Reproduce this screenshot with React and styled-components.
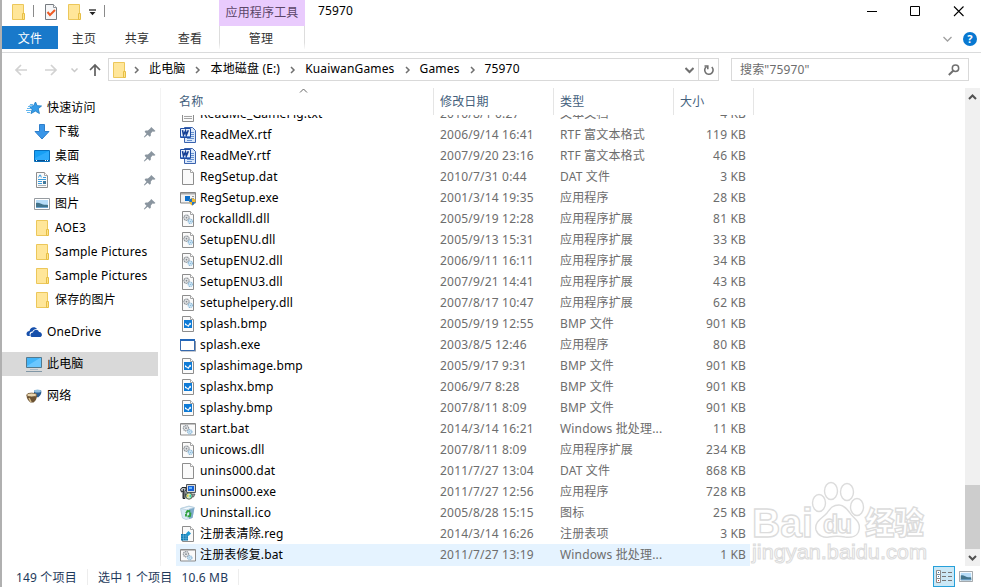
import React from 'react';
import styled, { createGlobalStyle } from 'styled-components';

const quickAccess = [
    { icon: 'download', name: '下载', pinned: true },
    { icon: 'desktop', name: '桌面', pinned: true },
    { icon: 'document', name: '文档', pinned: true },
    { icon: 'picture', name: '图片', pinned: true },
    { icon: 'folder', name: 'AOE3' },
    { icon: 'folder', name: 'Sample Pictures' },
    { icon: 'folder', name: 'Sample Pictures' },
    { icon: 'folder', name: '保存的图片' },
];

const files = [
    ['txt', 'ReadMe_GameFig.txt', '2010/8/1 0:27', '文本文档', '4 KB'],
    ['rtf', 'ReadMeX.rtf', '2006/9/14 16:41', 'RTF 富文本格式', '119 KB'],
    ['rtf', 'ReadMeY.rtf', '2007/9/20 23:16', 'RTF 富文本格式', '46 KB'],
    ['dat', 'RegSetup.dat', '2010/7/31 0:44', 'DAT 文件', '3 KB'],
    ['setup', 'RegSetup.exe', '2001/3/14 19:35', '应用程序', '28 KB'],
    ['dll', 'rockalldll.dll', '2005/9/19 12:28', '应用程序扩展', '81 KB'],
    ['dll', 'SetupENU.dll', '2005/9/13 15:31', '应用程序扩展', '33 KB'],
    ['dll', 'SetupENU2.dll', '2006/9/11 16:11', '应用程序扩展', '34 KB'],
    ['dll', 'SetupENU3.dll', '2007/9/21 14:41', '应用程序扩展', '43 KB'],
    ['dll', 'setuphelpery.dll', '2007/8/17 10:47', '应用程序扩展', '62 KB'],
    ['bmp', 'splash.bmp', '2005/9/19 12:55', 'BMP 文件', '901 KB'],
    ['exe', 'splash.exe', '2003/8/5 12:46', '应用程序', '80 KB'],
    ['bmp', 'splashimage.bmp', '2005/9/17 9:31', 'BMP 文件', '901 KB'],
    ['bmp', 'splashx.bmp', '2006/9/7 8:28', 'BMP 文件', '901 KB'],
    ['bmp', 'splashy.bmp', '2007/8/11 8:09', 'BMP 文件', '901 KB'],
    ['bat', 'start.bat', '2014/3/14 16:21', 'Windows 批处理...', '11 KB'],
    ['dll', 'unicows.dll', '2007/8/11 8:09', '应用程序扩展', '234 KB'],
    ['dat', 'unins000.dat', '2011/7/27 13:04', 'DAT 文件', '868 KB'],
    ['unins', 'unins000.exe', '2011/7/27 12:56', '应用程序', '728 KB'],
    ['recycle', 'Uninstall.ico', '2005/8/28 15:15', '图标', '25 KB'],
    ['reg', '注册表清除.reg', '2014/3/14 16:26', '注册表项', '3 KB'],
    ['bat', '注册表修复.bat', '2011/7/27 13:19', 'Windows 批处理...', '1 KB'],
];

const crumbs = ['此电脑', '本地磁盘 (E:)', 'KuaiwanGames', 'Games', '75970'];

// blank sheet with a folded corner, shared by most file types
const Sheet = () => (
    <>
        <path d="M2.5.5h8l3 3v12h-11z" fill="#fafafa" stroke="#8d8d8d" />
        <path d="M10.5.5v3h3" fill="#fff" stroke="#a5a5a5" />
    </>
);

const Gears = () => (
    <>
        <circle cx="6.5" cy="6.7" r="2.6" fill="#e8eaec" stroke="#92979c" strokeWidth="1.3" strokeDasharray="1.3 .5" />
        <circle cx="6.5" cy="6.7" r=".9" fill="#858c92" />
        <circle cx="10.3" cy="10.3" r="2.1" fill="#d8ecfa" stroke="#8db9d8" strokeWidth="1.3" strokeDasharray="1.1 .5" />
        <circle cx="10.3" cy="10.3" r=".6" fill="#6ea6cb" />
    </>
);

const drawings = {
    folder: (
        <>
            <path d="M2.500.5h11v15h-11z" fill="#ffe699" stroke="#ecc75a" />
            <path d="M12.500 9.500h2v6h-2z" fill="#ffe38a" stroke="#e6be45" />
        </>
    ),
    download: <path d="M5.500.5h5v7h4.500L8 15 1 7.500h4.500z" fill="#3a96e8" stroke="#2f7fcb" />,
    desktop: (
        <>
            <path d="M.5 2.500h15v11H.5z" fill="#17a0f5" stroke="#0870bd" />
            <path d="M1 10L15 3v9H1z" fill="#2eacfc" />
            <path d="M1 12.500h14" stroke="#084f8c" />
            <path d="M2 12.500h1M11 12.500h1M13 12.500h1" stroke="#fff" />
        </>
    ),
    document: (
        <>
            <Sheet />
            <path d="M4.500 5.500l1.200-2.500h.8l.8 2.500M9 5.500h3M4 7.500h8M4 9.500h4M4 11.500h4" stroke="#3a9bdc" fill="none" />
            <path d="M4 13.500h8" stroke="#a9b3ba" />
            <path d="M9 9h3v3H9z" fill="#41799b" />
        </>
    ),
    picture: (
        <>
            <path d="M.5 2.500h15v11H.5z" fill="#fff" stroke="#969ba0" />
            <path d="M2 4h12v8H2z" fill="#b6dcf8" />
            <path d="M2 7c3-1 5 1 7 1.500 2 .5 3 0 5 .5v3H2z" fill="#42748c" />
            <path d="M2 11h12v1H2z" fill="#6ea5cf" />
        </>
    ),
    star: (
        <>
            <path d="M9.500 2l1.600 3.700 4.400.3-3.300 2.700 1.200 4.800-4-2.400L5 13.500l1.200-4.500L3 6.200l4.600-.4z" fill="#369ce9" stroke="#217fc6" strokeWidth=".9" />
            <path d="M4 4.500h3M2 6.500h4M1 8.500h4M0 10.500h5M1 12.500h3" stroke="#64b7ef" />
        </>
    ),
    onedrive: (
        <>
            <path d="M1 11.500C-.5 9 1.500 7 3.500 7c.5-4 5.500-5 7.500-2-2-.3-4 1-4.500 2.500C4 7.500 3 9.500 4 12H2c-.5 0-.8-.2-1-.5z" fill="#164fab" />
            <path d="M5.500 13c-2-1-1-4.500 1.500-4.500C8 5 12 5 13 8c3-.3 4 4 1.500 5z" fill="#164fab" />
        </>
    ),
    pc: (
        <>
            <path d="M.5 1.500h15v10H.5z" fill="#42b4f8" stroke="#52798e" />
            <path d="M1 10L14 2h1v9H1z" fill="#6ac7ff" />
            <path d="M4 13.500h8" stroke="#a8bac7" />
            <path d="M0 15.500h16" stroke="#8197a6" />
        </>
    ),
    network: (
        <>
            <path d="M8 2.500l7-.5c1 3 0 5-3 7.500-3-1-4.500-3.500-4-7z" fill="#2c5e91" />
            <ellipse cx="11.500" cy="3" rx="3.500" ry="1.500" fill="#92bfdf" />
            <path d="M.5 7h10.500c0 3-1 6-3.500 7.500h-3C2 13 .5 10 .5 7z" fill="#6b5232" />
            <ellipse cx="5.700" cy="7" rx="5" ry="1.900" fill="#e8d5ae" stroke="#6e5636" strokeWidth=".8" />
            <path d="M3 10l2 4" stroke="#d6bd8c" strokeWidth="1.500" />
        </>
    ),
    txt: (
        <>
            <Sheet />
            <path d="M4 6.500h8M4 8.500h8M4 10.500h8M4 12.500h8" stroke="#a4a4a4" />
        </>
    ),
    rtf: (
        <>
            <path d="M4.500.5h8l3 3v12h-11z" fill="#dbe8fa" stroke="#3a62ad" />
            <path d="M11 5.500h3M11 7.500h3M11 9.500h3M7 11.500h7M7 13.500h5" stroke="#6590cf" />
            <path d="M.5 1.500h10v9H.5z" fill="#e9f1fc" stroke="#1f4da3" />
            <path d="M1 9h9v1H1z" fill="#5b8ad6" />
            <path d="M2.500 3.200L3.500 8l2-4 .8 4 2-4.800" fill="none" stroke="#143f94" strokeWidth="1.600" />
        </>
    ),
    dat: <Sheet />,
    setup: (
        <>
            <path d="M.5 2.500h15v10.500H.5z" fill="#f2f2f2" stroke="#858585" />
            <path d="M1 3h14v1.500H1z" fill="#aaa" />
            <path d="M5 6h5v5H5z" fill="#0d6fcb" />
            <path d="M12 6.500h2M12 8.500h2" stroke="#9a9a9a" />
            <path d="M9 9.500l3-1.300 3.500 1.300c0 3-1 5-3.500 6-2-1-3-3-3-6z" fill="#f4bb2c" />
            <path d="M12 8.200v3.700H9.300L9 9.500zM12 11.900h3c-.5 2-1.500 3-3 3.600z" fill="#2673c4" />
        </>
    ),
    dll: (
        <>
            <Sheet />
            <Gears />
        </>
    ),
    bmp: (
        <>
            <Sheet />
            <path d="M4 4h8v8H4z" fill="#0f7bd6" />
            <path d="M5 9V7l1.500 1.200L8 9.500l2-3 1 1V9l-1-.5L8.500 11 6.500 9.500z" fill="#fff" />
        </>
    ),
    exe: (
        <>
            <path d="M1 4h15v10.500H1z" fill="#8c96a6" />
            <path d="M.5 2.500h14v11H.5z" fill="#fff" stroke="#3669ad" />
            <path d="M0 2h15v2H0z" fill="#2367b9" />
        </>
    ),
    bat: (
        <>
            <path d="M.5 2.500h15v11.500H.5z" fill="#fafafa" stroke="#8b8b8b" />
            <path d="M1 3.500h14" stroke="#c2c2c2" />
            <g transform="translate(-.5 .5)">
                <Gears />
            </g>
        </>
    ),
    unins: (
        <>
            <path d="M6.500.5h9v8h-9z" fill="#d5d8dc" stroke="#4f555b" />
            <path d="M8 2h6v5H8z" fill="#1661d9" />
            <path d="M9 3h3v2H9z" fill="#64b8ff" />
            <path d="M5 10h10l-1.500 3H6z" fill="#9da2a6" stroke="#42464a" strokeWidth=".7" />
            <path d="M.5 5.500L2 3.500h4v2L5 7v7.500H3V7L1.500 8z" fill="#b9bdc1" stroke="#22272b" />
            <path d="M3.500 5v9" stroke="#33393e" />
            <circle cx="9" cy="12" r="3.200" fill="#d9e6c4" stroke="#2e4939" strokeWidth=".8" />
            <path d="M9 12l2-2v4z" fill="#2ce3b0" />
            <path d="M9 12l-2-2v3z" fill="#e4d23b" />
        </>
    ),
    recycle: (
        <>
            <path d="M.5 3.500L9 1l5 1.500-2 10.500-6 1.500L2.500 13z" fill="#d7e9f5" stroke="#b4cbda" strokeWidth=".8" />
            <path d="M9 1.500l5.500 1.200-1.900 10L9 14z" fill="#7da9c9" />
            <path d="M1 3.500l8-2 5.500 1-8 2.300z" fill="#f4fafe" stroke="#b2cbdc" strokeWidth=".7" />
            <path d="M6 8.500L7.500 6l2.800.2M10.500 7.500l-.5 3.500-2.500.5M6 11.500v-2.500" fill="none" stroke="#2fa03e" strokeWidth="1.900" />
        </>
    ),
    reg: (
        <>
            <Sheet />
            <path d="M1 8h7v6.500H1z" fill="#127bb0" />
            <path d="M3.500 8v6.500M6 8v6.500M1 10h7M1 12.300h7" stroke="#77c3e8" strokeWidth=".5" />
            <path d="M8.500 5l2.500 2.500L8.500 10 6 7.500z" fill="#229bd2" />
        </>
    ),
    check: (
        <>
            <path d="M2.500.5h8l3 3v12h-11z" fill="#f5f6f8" stroke="#767b80" />
            <path d="M10.500.5v3h3" fill="#fff" stroke="#8f9499" />
            <path d="M4.500 8l2.500 3 5-5" fill="none" stroke="#ee5a24" strokeWidth="2" />
        </>
    ),
    pin: (
        <path d="M10.200 3l4.300 4-1.300.8-1.700-.3-1.700 2v2.300l-1.100 1-2-2-3.200 2.700-.7-.5 2.700-3.300-1.900-2 1-1.100h2.300l2.300-2.200z" fill="#8a959f" />
    ),
};

const Icon = ({ name, size = 16 }) => (
    <Svg width={size} height={size} viewBox="0 0 16 16">{drawings[name]}</Svg>
);

const Chevron = ({ d = 'M3 1l3 3-3 3', color = '#707070', width = 1.5 }) => (
    <Svg width="9" height="8" viewBox="0 0 9 8">
        <path d={d} fill="none" stroke={color} strokeWidth={width} />
    </Svg>
);

const Arrow = ({ turn = 0, color = '#d2d2d2' }) => (
    <Svg width="14" height="14" viewBox="0 0 14 14">
        <path d="M13 7H2M7 2L2 7l5 5" fill="none" stroke={color} strokeWidth="1.700" transform={`rotate(${turn} 7 7)`} />
    </Svg>
);

const Watermark = () => (
    <WatermarkSvg width="181" height="96" viewBox="0 0 181 96">
        <g fill="#fff" fillOpacity=".75" stroke="#dcdcdc" strokeWidth="1.400">
            <text x="4" y="63" fontSize="41" fontWeight="700" textLength="61" lengthAdjust="spacingAndGlyphs">Bai</text>
            <path d="M91 31c-7 0-9 4-12 8-4 5-13 8-11 17 2 6 8 8 13 7 5-1 11-1 16 0 7 1 13-1 14-7 2-9-6-12-9-17-3-4-6-8-11-8z" />
            <ellipse cx="71" cy="29" rx="6.500" ry="8.500" />
            <ellipse cx="83" cy="17" rx="6.500" ry="8.500" />
            <ellipse cx="99" cy="18" rx="6.500" ry="8.500" />
            <ellipse cx="109" cy="33" rx="6.500" ry="8.500" />
            <text x="75" y="59" fontSize="25" fontWeight="700" textLength="29">du</text>
            <text x="117" y="60" fontSize="31" fontWeight="900" textLength="59" lengthAdjust="spacingAndGlyphs">经验</text>
            <text x="4" y="85" fontSize="20" fontWeight="400" strokeWidth="1" textLength="175" lengthAdjust="spacingAndGlyphs">jingyan.baidu.com</text>
        </g>
    </WatermarkSvg>
);

function TitleBar() {
    return (
        <Title>
            <QuickTools>
                <Icon name="folder" />
                <ToolDivider />
                <Icon name="check" />
                <Icon name="folder" />
                <Svg width="9" height="7" viewBox="0 0 9 7">
                    <path d="M1 1h7" stroke="#222" strokeWidth="1.300" />
                    <path d="M1.500 3h6L4.500 6.200z" fill="#222" />
                </Svg>
                <ToolDivider />
            </QuickTools>
            <ContextTitle>应用程序工具</ContextTitle>
            <WindowTitle>75970</WindowTitle>
            <WindowButtons width="98" height="12" viewBox="0 0 98 12" fill="none" stroke="#000">
                <path d="M0 5.500h10M43.500.5h9v9h-9z" />
                <path d="M87 .5l9.500 9.500M96.500.5L87 10" strokeWidth="1.100" />
            </WindowButtons>
        </Title>
    );
}

function Ribbon() {
    return (
        <RibbonBar>
            <FileTab>文件</FileTab>
            <Tab>主页</Tab>
            <Tab>共享</Tab>
            <Tab>查看</Tab>
            <ContextTab>管理</ContextTab>
            <RibbonEnd>
                <Chevron d="M.5 2l4 4 4-4" color="#a0a0a0" width={1.3} />
                <Help>?</Help>
            </RibbonEnd>
        </RibbonBar>
    );
}

function AddressBar() {
    return (
        <Navigation>
            <NavButtons>
                <Arrow />
                <Arrow turn={180} />
                <Chevron d="M1.500 2.500l3 3 3-3" color="#c9c9c9" />
                <Arrow turn={90} color="#606060" />
            </NavButtons>
            <Address>
                <Icon name="folder" />
                {crumbs.map((crumb) => (
                    <Crumb key={crumb}>
                        <Chevron />
                        <span>{crumb}</span>
                    </Crumb>
                ))}
                <AddressEnd>
                    <Chevron d="M.5 2l4 4 4-4" width={2} />
                    <Refresh>
                        <Svg width="12" height="12" viewBox="0 0 12 12" fill="none" stroke="#707070" strokeWidth="1.600">
                            <path d="M8.800 3A4.200 4.200 0 1 1 3.500 2.600" />
                            <path d="M1.500 2h3.300v3.300" />
                        </Svg>
                    </Refresh>
                </AddressEnd>
            </Address>
            <Search>
                <span>搜索"75970"</span>
                <Svg width="12" height="12" viewBox="0 0 12 12" fill="none" stroke="#707070">
                    <circle cx="7.500" cy="4.300" r="3.200" strokeWidth="1.500" />
                    <path d="M5.200 6.700L.8 11" strokeWidth="2" />
                </Svg>
            </Search>
        </Navigation>
    );
}

function Sidebar() {
    return (
        <Side>
            <SideRow><Icon name="star" />快速访问</SideRow>
            {quickAccess.map((item, i) => (
                <SideRow key={i} $nested>
                    <Icon name={item.icon} />
                    {item.name}
                    {item.pinned && <Pin><Icon name="pin" /></Pin>}
                </SideRow>
            ))}
            <SideRow $gap><Icon name="onedrive" />OneDrive</SideRow>
            <SideRow $gap $selected><Icon name="pc" />此电脑</SideRow>
            <SideRow $gap><Icon name="network" />网络</SideRow>
        </Side>
    );
}

function FileList() {
    return (
        <ListPane>
            <ListHeader>
                <HeaderCell>
                    名称
                    <SortMark>
                        <Chevron d="M1 5.500l3.500-3.500 3.500 3.500" color="#666" width={1} />
                    </SortMark>
                </HeaderCell>
                <HeaderCell>修改日期</HeaderCell>
                <HeaderCell>类型</HeaderCell>
                <HeaderCell>大小</HeaderCell>
            </ListHeader>
            <Rows>
                {files.map(([icon, name, date, type, size], i) => (
                    <Row key={name} $selected={i === files.length - 1}>
                        <NameCell><Icon name={icon} />{name}</NameCell>
                        <Cell $spacing=".2px">{date}</Cell>
                        <Cell>{type}</Cell>
                        <SizeCell>{size}</SizeCell>
                    </Row>
                ))}
            </Rows>
        </ListPane>
    );
}

function App() {
    return (
        <>
            <GlobalStyle />
            <Window>
                <TitleBar />
                <Ribbon />
                <AddressBar />
                <Main>
                    <Sidebar />
                    <FileList />
                    <ScrollBar>
                        <Chevron d="M1 6l3.500-3.500L8 6" color="#505050" width={2} />
                        <Thumb />
                        <Chevron d="M1 2l3.500 3.500L8 2" color="#505050" width={2} />
                    </ScrollBar>
                </Main>
                <StatusBar>
                    <StatusItem $width="82px">149 个项目</StatusItem>
                    <StatusItem $width="151px">
                        <span>选中 1 个项目</span>
                        <span>10.6 MB</span>
                    </StatusItem>
                    <ViewButtons>
                        <ViewButton $active>
                            <Svg width="17" height="14" viewBox="0 0 17 14" fill="none">
                                <path d="M.5.5h4v4h-4zM.5 4.500h4v4h-4zM.5 8.500h4v4h-4z" fill="#fff" stroke="#8a8a8a" />
                                <path d="M2 2.500h1M2 6.500h1" stroke="#337ab8" />
                                <path d="M2 10.500h1" stroke="#c43c35" />
                                <path d="M6 2.500h4M12 2.500h4M6 6.500h4M12 6.500h4M6 10.500h4M12 10.500h4" stroke="#777" />
                            </Svg>
                        </ViewButton>
                        <ViewButton>
                            <Svg width="14" height="11" viewBox="0 2 16 12" preserveAspectRatio="none">{drawings.picture}</Svg>
                        </ViewButton>
                    </ViewButtons>
                </StatusBar>
                <Watermark />
            </Window>
        </>
    );
}


const GlobalStyle = createGlobalStyle`
    body {
        margin: 0;
        overflow: hidden;
        background-color: #fff;
    }
`;

const Svg = styled.svg`
    display: block;
    flex-shrink: 0;
`;

const Window = styled.div`
    position: relative;
    display: flex;
    flex-direction: column;
    width: 981px;
    height: 587px;
    box-sizing: border-box;
    border-left: 2px solid #b0b0b0;
    background-color: #fff;
    color: #000;
    font-family: "Noto Sans", "Noto Sans CJK SC", sans-serif;
    font-size: 12px;
    line-height: 20px;
    letter-spacing: 0.16px;
    white-space: nowrap;
    overflow: hidden;
`;

const Title = styled.div`
    display: flex;
    height: 26px;
    flex-shrink: 0;
`;

const QuickTools = styled.div`
    display: flex;
    align-items: center;
    gap: 6px;
    width: 217px;
    height: 24px;
    padding-left: 8px;
    box-sizing: border-box;

    & > :nth-child(4) { margin-left: 1px; }
`;

const ToolDivider = styled.div`
    width: 1px;
    height: 12px;
    margin: 0 3px 2px 1px;
    background-color: #8a8a8a;
`;

const ContextTitle = styled.div`
    width: 86px;
    background-color: #e9cbfd;
    color: #5b4668;
    line-height: 25px;
    text-align: center;
`;

const WindowTitle = styled.div`
    padding-left: 13px;
    line-height: 21px;
`;

const WindowButtons = styled(Svg)`
    margin: 6px 16px 0 auto;
`;

const RibbonBar = styled.div`
    display: flex;
    height: 27px;
    flex-shrink: 0;
    box-sizing: border-box;
    border-bottom: 1px solid #dadbdc;
    line-height: 25px;
    text-align: center;
`;

const Tab = styled.div`
    width: 53px;
    height: 23px;
    padding-right: 1px;
    box-sizing: border-box;
    color: #333;
`;

const FileTab = styled(Tab)`
    width: 56px;
    padding-right: 0;
    background-color: #1979ca;
    color: #fff;
`;

const ContextTab = styled(Tab)`
    width: 86px;
    padding-right: 2px;
    margin-left: 2px;
    border: 1px solid;
    border-width: 0 1px;
    border-image: linear-gradient(#ddd 70%, #fff) 1;
`;

const RibbonEnd = styled.div`
    display: flex;
    align-items: center;
    gap: 11px;
    height: 26px;
    margin: 0 4px 0 auto;
`;

const Help = styled.div`
    width: 14px;
    height: 14px;
    border-radius: 50%;
    background-color: #0878d1;
    color: #fff;
    font-size: 11px;
    font-weight: 700;
    line-height: 14px;
`;

const Navigation = styled.div`
    display: flex;
    align-items: center;
    height: 35px;
    flex-shrink: 0;
    padding: 0 12px 2px 0;
    box-sizing: border-box;
`;

const NavButtons = styled.div`
    display: flex;
    align-items: center;
    width: 94px;
    padding-left: 12px;

    & > :nth-child(2) { margin-left: 16px; }
    & > :nth-child(3) { margin-left: 12px; }
    & > :nth-child(4) { margin-left: 9px; }
`;

const Address = styled.div`
    display: flex;
    align-items: center;
    width: 611px;
    height: 23px;
    padding-left: 2px;
    box-sizing: border-box;
    border: 1px solid #d9d9d9;
`;

const Crumb = styled.div`
    display: flex;
    align-items: center;
    padding-left: 8px;
    gap: 8px;

    &:nth-child(2) { padding-left: 5px; }

    & span { line-height: 19px; padding-bottom: 2px; }
`;

const AddressEnd = styled.div`
    display: flex;
    align-items: center;
    gap: 4px;
    margin-left: auto;
`;

const Refresh = styled.div`
    display: flex;
    align-items: center;
    justify-content: center;
    width: 20px;
    height: 21px;
    box-sizing: border-box;
    border-left: 1px solid #d9d9d9;
`;

const Search = styled.div`
    display: flex;
    align-items: center;
    justify-content: space-between;
    width: 238px;
    height: 23px;
    margin-left: auto;
    padding: 0 8px;
    box-sizing: border-box;
    border: 1px solid #d9d9d9;
    color: #6d6d6d;
`;

const Main = styled.div`
    display: flex;
    height: 478px;
    flex-shrink: 0;
`;

const Side = styled.div`
    width: 159px;
    height: 100%;
    padding-top: 8px;
    box-sizing: border-box;
    border-right: 1px solid #f3f3f3;
`;

const SideRow = styled.div`
    display: flex;
    align-items: center;
    gap: 5px;
    width: 156px;
    height: 24px;
    margin-top: ${({ $gap }) => ($gap ? '8px' : 0)};
    padding-left: ${({ $nested }) => ($nested ? '32px' : '24px')};
    box-sizing: border-box;
    background-color: ${({ $selected }) => ($selected ? '#d9d9d9' : 'transparent')};
`;

const Pin = styled.div`
    margin: 0 1px 0 auto;
`;

const ListPane = styled.div`
    display: flex;
    flex-direction: column;
    flex: 1;
    padding-left: 15px;
`;

const ListHeader = styled.div`
    display: grid;
    grid-template-columns: 258px 120px 120px 80px;
    height: 27px;
    flex-shrink: 0;
    color: #43607c;
    line-height: 27px;
`;

const HeaderCell = styled.div`
    position: relative;
    padding-left: 6px;
    border-right: 1px solid #e5e5e5;

    &:first-child { padding-left: 3px; }
`;

const SortMark = styled.div`
    position: absolute;
    top: -1px;
    left: 123px;
`;

const Rows = styled.div`
    display: flex;
    flex-direction: column;
    justify-content: flex-end;
    height: 451px;
    padding-bottom: 1px;
    box-sizing: border-box;
    overflow: hidden;
`;

const Row = styled.div`
    display: grid;
    grid-template-columns: 264px 120px 113px 73px;
    align-items: center;
    width: 574px;
    height: 21px;
    flex-shrink: 0;
    background-color: ${({ $selected }) => ($selected ? '#e5f3ff' : 'transparent')};
    box-shadow: ${({ $selected }) => ($selected ? '0 1px #e5f3ff' : 'none')};
`;

const Cell = styled.div`
    color: #6d6d6d;
    letter-spacing: ${({ $spacing }) => $spacing || 'inherit'};
`;

const NameCell = styled.div`
    display: flex;
    align-items: center;
    gap: 4px;
    padding-left: 4px;
    color: #000;
`;

const SizeCell = styled(Cell)`
    text-align: right;
`;

const ScrollBar = styled.div`
    display: flex;
    flex-direction: column;
    align-items: center;
    width: 15px;
    margin-right: 1px;
    padding: 5px 0 4px;
    box-sizing: border-box;
    background-color: #f0f0f0;
`;

const Thumb = styled.div`
    width: 100%;
    height: 64px;
    margin: auto 0 5px;
    background-color: #cdcdcd;
`;

const StatusBar = styled.div`
    display: flex;
    align-items: center;
    height: 21px;
    padding-left: 4px;
    color: #1e395b;
`;

const StatusItem = styled.div`
    display: flex;
    gap: 9px;
    width: ${({ $width }) => $width};
    padding: 2px 0 0 10px;
    box-sizing: border-box;
    border-right: 1px solid #ededed;
    line-height: 14px;
`;

const ViewButtons = styled.div`
    display: flex;
    margin: 0 4px 0 auto;
`;

const ViewButton = styled.div`
    display: flex;
    align-items: center;
    justify-content: center;
    width: 22px;
    height: 21px;
    box-sizing: border-box;
    border: 1px solid ${({ $active }) => ($active ? '#26a0da' : 'transparent')};
    background-color: ${({ $active }) => ($active ? '#cbe8f6' : 'transparent')};
`;

const WatermarkSvg = styled.svg`
    position: absolute;
    left: 746px;
    top: 474px;
    font-family: "Liberation Sans", "Noto Sans CJK SC", sans-serif;
    letter-spacing: 0;
    pointer-events: none;
`;

export default App;
